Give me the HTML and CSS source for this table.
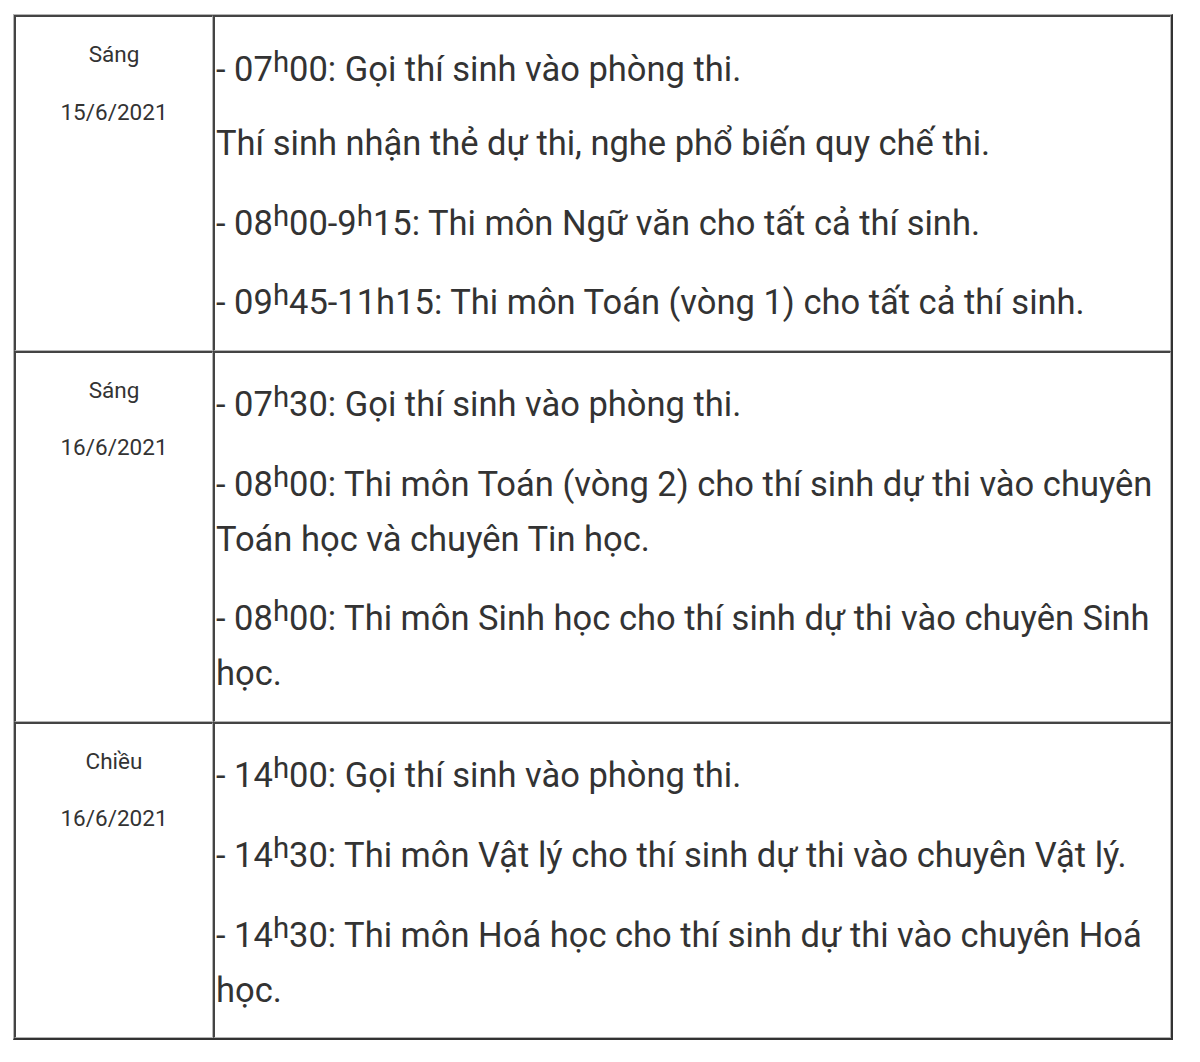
FILE: index.html
```html
<!DOCTYPE html>
<html lang="vi">
<head>
<meta charset="utf-8">
<title>Lịch thi</title>
<link rel="stylesheet" href="styles.css">
</head>
<body>
<table class="schedule">
  <tr>
    <td class="when">
      <p>Sáng</p>
      <p>15/6/2021</p>
    </td>
    <td class="what">
      <p>- 07<sup>h</sup>00: Gọi thí sinh vào phòng thi.</p>
      <p>Thí sinh nhận thẻ dự thi, nghe phổ biến quy chế thi.</p>
      <p>- 08<sup>h</sup>00-9<sup>h</sup>15: Thi môn Ngữ văn cho tất cả thí sinh.</p>
      <p>- 09<sup>h</sup>45-11h15: Thi môn Toán (vòng 1) cho tất cả thí sinh.</p>
    </td>
  </tr>
  <tr>
    <td class="when">
      <p>Sáng</p>
      <p>16/6/2021</p>
    </td>
    <td class="what">
      <p>- 07<sup>h</sup>30: Gọi thí sinh vào phòng thi.</p>
      <p>- 08<sup>h</sup>00: Thi môn Toán (vòng 2) cho thí sinh dự thi vào chuyên Toán học và chuyên Tin học.</p>
      <p>- 08<sup>h</sup>00: Thi môn Sinh học cho thí sinh dự thi vào chuyên Sinh học.</p>
    </td>
  </tr>
  <tr>
    <td class="when">
      <p>Chiều</p>
      <p>16/6/2021</p>
    </td>
    <td class="what">
      <p>- 14<sup>h</sup>00: Gọi thí sinh vào phòng thi.</p>
      <p>- 14<sup>h</sup>30: Thi môn Vật lý cho thí sinh dự thi vào chuyên Vật lý.</p>
      <p>- 14<sup>h</sup>30: Thi môn Hoá học cho thí sinh dự thi vào chuyên Hoá học.</p>
    </td>
  </tr>
</table>
</body>
</html>
```

FILE: styles.css
```css
html, body {
  margin: 0;
  padding: 0;
  background: #ffffff;
}

body {
  padding: 14px 0 0 13px;
  font-family: Roboto, "Liberation Sans", sans-serif;
  color: #333333;
}

.schedule {
  width: 1160px;
  border-collapse: separate;
  border-spacing: 0;
  border-style: solid;
  border-width: 1px 2px 2px 1px;
  border-color: #b4b4b4 #333333 #333333 #b4b4b4;
}

.schedule td {
  vertical-align: top;
  padding: 0 1px;
  border-style: solid;
  border-width: 2px 1px 1px 2px;
  border-color: #444444 #b4b4b4 #b4b4b4 #444444;
}

.when {
  width: 194px;
  text-align: center;
  font-size: 22.5px;
}

.when p {
  margin: 17px 0;
  line-height: 40.5px;
}

.what {
  font-size: 34.5px;
}

.what p {
  margin: 19.5px 0;
  line-height: 55px;
}

sup {
  font-size: 0.85em;
  line-height: 50px;
  vertical-align: 0.31em;
}
```
